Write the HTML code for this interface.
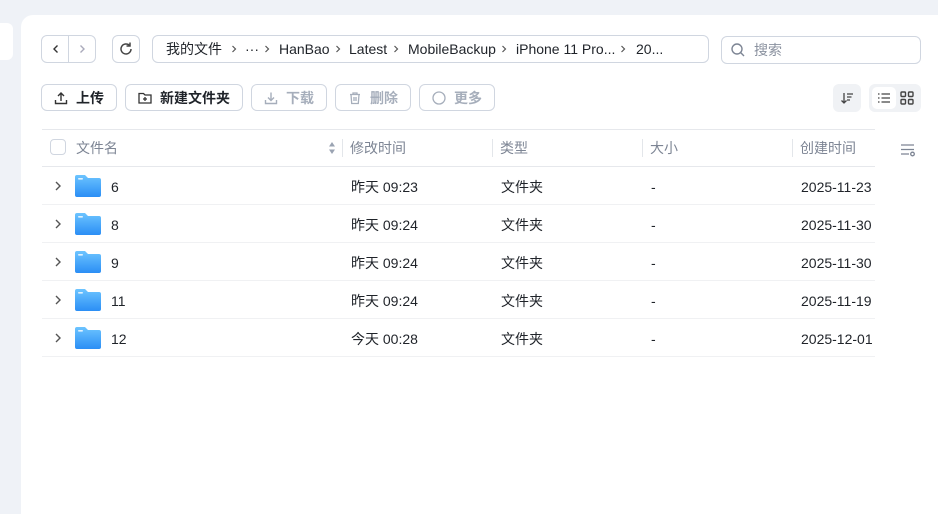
<!DOCTYPE html>
<html style="width:938px;height:514px;overflow:hidden"><head><meta charset="utf-8"><style>
*{box-sizing:border-box;margin:0;padding:0}
body{width:938px;height:514px;background:#eff2f7;font-family:"Liberation Sans","Noto Sans CJK SC",sans-serif;font-size:14px;color:#1f2329;position:relative;overflow:hidden}
.abs{position:absolute}
.panel{left:21px;top:15px;width:917px;height:499px;background:#fff;border-radius:12px 0 0 0}
.side{left:0;top:23px;width:13px;height:37px;background:#fff;border-radius:0 6px 6px 0}
.b{border:1px solid #d0d6e0;border-radius:6px;background:#fff}
.btn{top:84px;height:27px;display:flex;align-items:center;justify-content:center;gap:8px;font-weight:bold;font-size:14px}
.dis{color:#a6aebb}
.dis svg{stroke:#a6aebb}
.th{top:129px;height:38px;border-top:1px solid #e6e8ec;border-bottom:1px solid #e6e8ec;left:42px;width:833px}
.hc{position:absolute;top:129px;line-height:38px;color:#7d8594;font-size:14px}
.sep{position:absolute;top:139px;width:1px;height:18px;background:#e3e6ea}
.row{position:absolute;left:42px;width:833px;height:38px;border-bottom:1px solid #f0f1f3}
.row span{position:absolute;top:1px;line-height:38px;height:38px;font-size:14px}
.folder{position:absolute;left:33px;top:8px;width:26px;height:22px}
.bc{position:absolute;top:35px;line-height:29px;font-size:14px;white-space:nowrap}
.ch{position:absolute;top:44px}
</style></head><body>
<div class="abs side"></div>
<div class="abs panel"></div>
<div class="abs b" style="left:41px;top:35px;width:55px;height:28px"></div>
<div class="abs" style="left:68px;top:36px;width:1px;height:26px;background:#d0d6e0"></div>
<svg class="abs" style="left:50px;top:43px" width="12" height="12" viewBox="0 0 12 12"><path d="M7.5 2.5 4 6l3.5 3.5" fill="none" stroke="#333" stroke-width="1.4"/></svg>
<svg class="abs" style="left:76px;top:43px" width="12" height="12" viewBox="0 0 12 12"><path d="M4.5 2.5 8 6 4.5 9.5" fill="none" stroke="#aab" stroke-width="1.4"/></svg>
<div class="abs b" style="left:112px;top:35px;width:28px;height:28px"></div>
<svg class="abs" style="left:118px;top:41px" width="16" height="16" viewBox="0 0 16 16"><path d="M13 8a5 5 0 1 1-1.5-3.6" fill="none" stroke="#444" stroke-width="1.5"/><path d="M12 1.5v3.5H8.5" fill="none" stroke="#444" stroke-width="1.5"/></svg>
<div class="abs b" style="left:152px;top:35px;width:557px;height:28px"></div>
<div class="bc" style="left:166px">我的文件</div>
<div class="bc" style="left:245px">···</div>
<div class="bc" style="left:279px">HanBao</div>
<div class="bc" style="left:349px">Latest</div>
<div class="bc" style="left:408px">MobileBackup</div>
<div class="bc" style="left:516px">iPhone 11 Pro...</div>
<div class="bc" style="left:636px">20...</div>
<svg class="ch" style="left:230px" width="8" height="10" viewBox="0 0 8 10"><path d="M2.5 2 5.5 5 2.5 8" fill="none" stroke="#555" stroke-width="1.2"/></svg>
<svg class="ch" style="left:263px" width="8" height="10" viewBox="0 0 8 10"><path d="M2.5 2 5.5 5 2.5 8" fill="none" stroke="#555" stroke-width="1.2"/></svg>
<svg class="ch" style="left:334px" width="8" height="10" viewBox="0 0 8 10"><path d="M2.5 2 5.5 5 2.5 8" fill="none" stroke="#555" stroke-width="1.2"/></svg>
<svg class="ch" style="left:392px" width="8" height="10" viewBox="0 0 8 10"><path d="M2.5 2 5.5 5 2.5 8" fill="none" stroke="#555" stroke-width="1.2"/></svg>
<svg class="ch" style="left:500px" width="8" height="10" viewBox="0 0 8 10"><path d="M2.5 2 5.5 5 2.5 8" fill="none" stroke="#555" stroke-width="1.2"/></svg>
<svg class="ch" style="left:619px" width="8" height="10" viewBox="0 0 8 10"><path d="M2.5 2 5.5 5 2.5 8" fill="none" stroke="#555" stroke-width="1.2"/></svg>
<div class="abs b" style="left:721px;top:36px;width:200px;height:28px"></div>
<svg class="abs" style="left:730px;top:42px" width="16" height="16" viewBox="0 0 16 16"><circle cx="7" cy="7" r="5" fill="none" stroke="#7d8594" stroke-width="1.4"/><path d="M10.8 10.8 14 14" stroke="#7d8594" stroke-width="1.4"/></svg>
<div class="abs" style="left:754px;top:36px;line-height:28px;color:#8a919f">搜索</div>
<div class="abs b btn" style="left:41px;width:76px"><svg width="14" height="14" viewBox="0 0 14 14" fill="none" stroke="#333" stroke-width="1.4"><path d="M7 10V2M4 5l3-3 3 3M1.5 9v3.5h11V9"/></svg>上传</div>
<div class="abs b btn" style="left:125px;width:118px"><svg width="14" height="14" viewBox="0 0 14 14" fill="none" stroke="#333" stroke-width="1.3"><path d="M1 2.5h4.5l1.5 1.5h6v8H1z"/><path d="M7 6v4M5 8h4"/></svg>新建文件夹</div>
<div class="abs b btn dis" style="left:251px;width:76px"><svg width="14" height="14" viewBox="0 0 14 14" fill="none" stroke-width="1.4"><path d="M7 1.5v8M4 6.5l3 3 3-3M1.5 9v3.5h11V9"/></svg>下载</div>
<div class="abs b btn dis" style="left:335px;width:76px"><svg width="14" height="14" viewBox="0 0 14 14" fill="none" stroke-width="1.3"><path d="M2 3.5h10M5 3.5V2h4v1.5M3 3.5l.7 9h6.6l.7-9M6 6v4M8 6v4"/></svg>删除</div>
<div class="abs b btn dis" style="left:419px;width:76px"><svg width="14" height="14" viewBox="0 0 14 14" fill="none" stroke-width="1.3"><circle cx="7" cy="7" r="6"/></svg>更多</div>
<div class="abs" style="left:833px;top:84px;width:28px;height:28px;background:#f0f2f5;border-radius:6px"></div>
<svg class="abs" style="left:840px;top:91px" width="14" height="14" viewBox="0 0 14 14" fill="none" stroke="#444" stroke-width="1.3"><path d="M4 2v10M1.5 9.5 4 12l2.5-2.5M7 3h6M7 6h4.5M7 9h3"/></svg>
<div class="abs" style="left:869px;top:84px;width:52px;height:28px;background:#f0f2f5;border-radius:6px"></div>
<div class="abs" style="left:872px;top:87px;width:24px;height:22px;background:#fff;border-radius:5px"></div>
<svg class="abs" style="left:877px;top:91px" width="14" height="14" viewBox="0 0 14 14" stroke="#444" stroke-width="1.3"><path d="M1 3h1.5M1 7h1.5M1 11h1.5M4.5 3H13M4.5 7H13M4.5 11H13"/></svg>
<svg class="abs" style="left:900px;top:91px" width="14" height="14" viewBox="0 0 14 14" fill="none" stroke="#444" stroke-width="1.4"><rect x="1" y="1" width="4.5" height="4.5" rx="1"/><rect x="8.5" y="1" width="4.5" height="4.5" rx="1"/><rect x="1" y="8.5" width="4.5" height="4.5" rx="1"/><rect x="8.5" y="8.5" width="4.5" height="4.5" rx="1"/></svg>
<div class="abs th"></div>
<div class="abs" style="left:50px;top:139px;width:16px;height:16px;border:1px solid #d0d6e0;border-radius:4px"></div>
<div class="hc" style="left:76px">文件名</div>
<svg class="abs" style="left:328px;top:141px" width="8" height="14" viewBox="0 0 8 14" fill="#9aa3b2"><path d="M4 1 7 5.5H1zM4 13 1 8.5h6z"/></svg>
<div class="sep" style="left:342px"></div><div class="hc" style="left:350px">修改时间</div>
<div class="sep" style="left:492px"></div><div class="hc" style="left:500px">类型</div>
<div class="sep" style="left:642px"></div><div class="hc" style="left:650px">大小</div>
<div class="sep" style="left:792px"></div><div class="hc" style="left:800px">创建时间</div>
<svg class="abs" style="left:900px;top:142px" width="16" height="16" viewBox="0 0 16 16" fill="none" stroke="#7d8594" stroke-width="1.3"><path d="M1 3h13M1 7.5h13M1 12h8"/><circle cx="12.5" cy="12" r="1.8"/></svg>
<svg width="0" height="0" style="position:absolute"><defs><linearGradient id="g" x1="0" y1="0" x2="0" y2="1"><stop offset="0" stop-color="#6cc4ff"/><stop offset="1" stop-color="#2b8ef5"/></linearGradient></defs></svg>
<div class="row" style="top:167px"><svg class="abs" style="left:11px;top:13px" width="10" height="12" viewBox="0 0 10 12"><path d="M3 2l4 4-4 4" fill="none" stroke="#555" stroke-width="1.4"/></svg><svg class="folder" viewBox="0 0 26 22"><path d="M2 0h8l3 3h11a2 2 0 0 1 2 2v15a2 2 0 0 1-2 2H2a2 2 0 0 1-2-2V2a2 2 0 0 1 2-2z" fill="url(#g)"/><rect x="3" y="3" width="5" height="1.6" rx=".8" fill="#fff" opacity=".8"/></svg><span style="left:69px">6</span><span style="left:309px">昨天 09:23</span><span style="left:459px">文件夹</span><span style="left:609px">-</span><span style="left:759px">2025-11-23</span></div>
<div class="row" style="top:205px"><svg class="abs" style="left:11px;top:13px" width="10" height="12" viewBox="0 0 10 12"><path d="M3 2l4 4-4 4" fill="none" stroke="#555" stroke-width="1.4"/></svg><svg class="folder" viewBox="0 0 26 22"><path d="M2 0h8l3 3h11a2 2 0 0 1 2 2v15a2 2 0 0 1-2 2H2a2 2 0 0 1-2-2V2a2 2 0 0 1 2-2z" fill="url(#g)"/><rect x="3" y="3" width="5" height="1.6" rx=".8" fill="#fff" opacity=".8"/></svg><span style="left:69px">8</span><span style="left:309px">昨天 09:24</span><span style="left:459px">文件夹</span><span style="left:609px">-</span><span style="left:759px">2025-11-30</span></div>
<div class="row" style="top:243px"><svg class="abs" style="left:11px;top:13px" width="10" height="12" viewBox="0 0 10 12"><path d="M3 2l4 4-4 4" fill="none" stroke="#555" stroke-width="1.4"/></svg><svg class="folder" viewBox="0 0 26 22"><path d="M2 0h8l3 3h11a2 2 0 0 1 2 2v15a2 2 0 0 1-2 2H2a2 2 0 0 1-2-2V2a2 2 0 0 1 2-2z" fill="url(#g)"/><rect x="3" y="3" width="5" height="1.6" rx=".8" fill="#fff" opacity=".8"/></svg><span style="left:69px">9</span><span style="left:309px">昨天 09:24</span><span style="left:459px">文件夹</span><span style="left:609px">-</span><span style="left:759px">2025-11-30</span></div>
<div class="row" style="top:281px"><svg class="abs" style="left:11px;top:13px" width="10" height="12" viewBox="0 0 10 12"><path d="M3 2l4 4-4 4" fill="none" stroke="#555" stroke-width="1.4"/></svg><svg class="folder" viewBox="0 0 26 22"><path d="M2 0h8l3 3h11a2 2 0 0 1 2 2v15a2 2 0 0 1-2 2H2a2 2 0 0 1-2-2V2a2 2 0 0 1 2-2z" fill="url(#g)"/><rect x="3" y="3" width="5" height="1.6" rx=".8" fill="#fff" opacity=".8"/></svg><span style="left:69px">11</span><span style="left:309px">昨天 09:24</span><span style="left:459px">文件夹</span><span style="left:609px">-</span><span style="left:759px">2025-11-19</span></div>
<div class="row" style="top:319px"><svg class="abs" style="left:11px;top:13px" width="10" height="12" viewBox="0 0 10 12"><path d="M3 2l4 4-4 4" fill="none" stroke="#555" stroke-width="1.4"/></svg><svg class="folder" viewBox="0 0 26 22"><path d="M2 0h8l3 3h11a2 2 0 0 1 2 2v15a2 2 0 0 1-2 2H2a2 2 0 0 1-2-2V2a2 2 0 0 1 2-2z" fill="url(#g)"/><rect x="3" y="3" width="5" height="1.6" rx=".8" fill="#fff" opacity=".8"/></svg><span style="left:69px">12</span><span style="left:309px">今天 00:28</span><span style="left:459px">文件夹</span><span style="left:609px">-</span><span style="left:759px">2025-12-01</span></div>
</body></html>
